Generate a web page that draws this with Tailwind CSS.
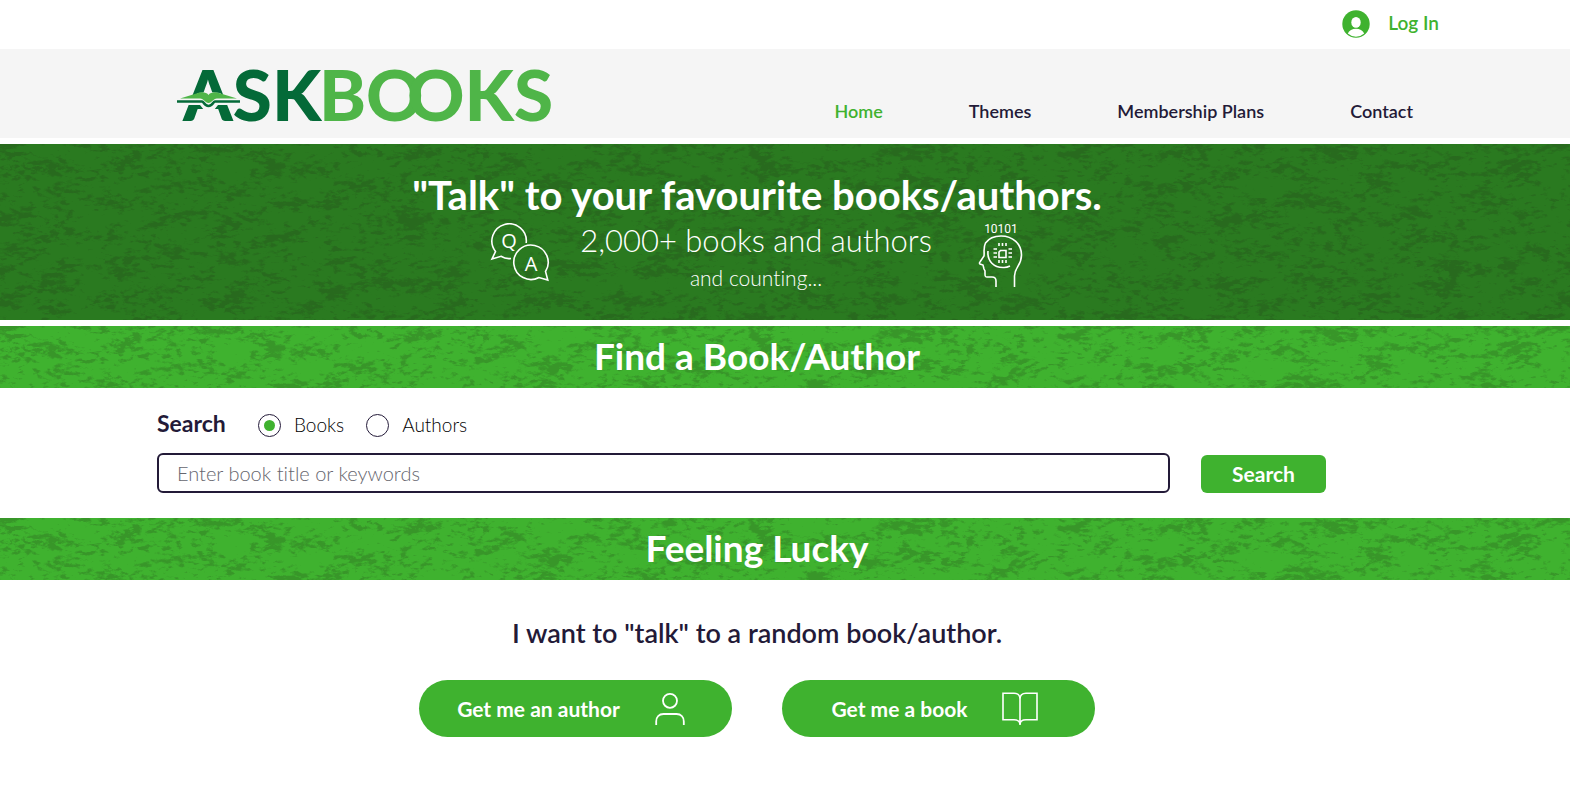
<!DOCTYPE html>
<html lang="en">
<head>
    <meta charset="utf-8" />
    <meta name="viewport" content="width=device-width, initial-scale=1" />
    <script src="https://cdn.jsdelivr.net/npm/@tailwindcss/browser@4"></script>
    <title>AskBooks</title>
</head>
<body class="bg-white font-['Lato','Open_Sans',sans-serif] text-[#231a38] [font-variant-ligatures:none]">

    <!-- shared texture for the green strips -->
    <svg class="absolute w-0 h-0" aria-hidden="true">
        <defs>
            <filter id="grunge" x="0" y="0" width="100%" height="100%" color-interpolation-filters="sRGB">
                <feTurbulence type="fractalNoise" baseFrequency="0.028 0.06" numOctaves="6" seed="11" result="fine" />
                <feTurbulence type="fractalNoise" baseFrequency="0.12 0.24" numOctaves="4" seed="5" result="grain" />
                <feComposite in="fine" in2="grain" operator="arithmetic" k2="0.5" k3="0.5" />
                <feColorMatrix values="0 0 0 0 0.14  0 0 0 0 0.28  0 0 0 0 0.1  9 0 0 0 -4.6" />
            </filter>
        </defs>
    </svg>

    <!-- top bar -->
    <div class="h-[49px] pr-[131px] pb-1 flex items-center justify-end">
        <a href="#" class="flex items-center gap-[18px] text-[19px] leading-6 font-semibold text-[#3fb22f]">
            <svg class="mt-0.5 w-7 h-7" viewBox="0 0 28 28" aria-hidden="true">
                <circle cx="14" cy="14" r="13.7" fill="#3fb22f" />
                <ellipse cx="14" cy="12.4" rx="4.7" ry="5.4" fill="#fff" />
                <path d="M5.800 23.600c1.200-3.200 4.600-4.800 8.200-4.800s7 1.600 8.200 4.800A12.500 12.500 0 0 1 14 26.800a12.500 12.500 0 0 1-8.200-3.200z" fill="#fff" />
            </svg>
            Log In
        </a>
    </div>

    <header class="bg-[#f5f5f5] h-[89px] pl-[176px] pr-[157px] flex justify-between">
        <a href="#" aria-label="ASKBOOKS">
            <svg class="w-[386px] h-[89px]" viewBox="0 0 386 89" font-family="Lato, sans-serif" font-weight="900" font-size="71">
                <text x="7" y="72" fill="#046a38">ASK</text>
                <text x="143" y="72" fill="#4fb548">BO</text>
                <text x="231" y="72" fill="#4fb548">OKS</text>
                <!-- open book across the A -->
                <path d="M1 49h16l5-5 11-1 11 1 6 5h14v7H42l-4 5H28l-4-5H1z" fill="#f5f5f5" />
                <path d="M1 52.500h25c2 0 2 4.500 6.500 4.500s4.500-4.500 6.500-4.500h25" stroke="#046a38" stroke-width="2.6" fill="none" />
                <path d="M4 49.500 22 44c4-1.500 9-.5 10.500 2 1.500-2.500 6.500-3.500 10.500-2l18 5.500H41c-4 0-5 4.500-8.500 4.500S28 49.500 24 49.500z" fill="#4fb548" />
            </svg>
        </a>
        <nav class="flex gap-[86px] pt-[50px] text-lg leading-6 font-semibold">
            <a href="#" class="text-[#3fb22f]">Home</a>
            <a href="#">Themes</a>
            <a href="#">Membership Plans</a>
            <a href="#">Contact</a>
        </nav>
    </header>

    <main>
        <!-- hero -->
        <section class="relative mt-1.5 h-44 pt-[26px] pr-14 bg-[#2a7a20] text-white text-center">
            <svg class="absolute inset-0 w-full h-full opacity-30" aria-hidden="true"><rect width="100%" height="100%" filter="url(#grunge)" /></svg>
            <div class="relative">
                <h1 class="text-[40px] leading-[50px] font-bold">"Talk" to your favourite books/authors.</h1>
                <div class="flex justify-center gap-[30px]">
                    <svg class="mt-[3px] w-[60px] h-[60px]" viewBox="0 0 60 60" fill="none" stroke="#fff" stroke-width="1.6" aria-hidden="true">
                        <path d="M21 35.500c-4 .6-7-.3-10-2.200L2 36l3.500-7.500A17.200 17.200 0 1 1 36.200 20" />
                        <path d="M55.500 48.500A17.200 17.200 0 1 0 49 54.500l8.800 2.600z" />
                        <text x="19" y="25" text-anchor="middle" fill="#fff" stroke="none" font-family="Open Sans, sans-serif" font-size="20">Q</text>
                        <text x="41" y="48" text-anchor="middle" fill="#fff" stroke="none" font-family="Open Sans, sans-serif" font-size="20">A</text>
                    </svg>
                    <div class="mr-4">
                        <p class="text-[31px] leading-10 font-light">2,000+ books and authors</p>
                        <p class="text-[21px] leading-9 font-light">and counting...</p>
                    </div>
                    <svg class="mt-[3px] w-[46px] h-[66px]" viewBox="0 0 46 66" fill="none" stroke="#fff" stroke-width="1.6" aria-hidden="true">
                        <text x="23" y="10" text-anchor="middle" fill="#fff" stroke="none" font-family="Roboto, sans-serif" font-size="12">10101</text>
                        <path d="M18 64v-6c0-3-1-4-4-4H9c-2 0-2-1-2-3v-3l-1-2-1-4-3-1c-.8-.5-.6-1.500 0-2l4-6c.6-4-1-8 1.500-13C11 15 17 13 23 13c12 0 20.500 8 20.500 19 0 11-7 12-7 21v11" />
                        <path d="M10 28c-1 10 6 17 16 16.500 2 0 4-.5 6-1.500" />
                        <path d="M22.500 27.500h5.500v7h-7v-5.500z M21 20v3M24.500 20v3M28 20v3M21 37v3M24.500 37v3M28 37v3M15.500 26h3.500M15.500 30h3.500M15.500 34h3.500M30.500 26h3.500M30.500 30h3.500M30.500 34h3.500" />
                    </svg>
                </div>
            </div>
        </section>

        <section class="relative mt-1.5 h-[62px] pr-14 pb-0.5 flex items-center justify-center bg-[#3fb22f] text-white">
            <svg class="absolute inset-0 w-full h-full opacity-25" aria-hidden="true"><rect width="100%" height="100%" filter="url(#grunge)" /></svg>
            <h2 class="relative text-[37px] leading-10 font-bold">Find a Book/Author</h2>
        </section>

        <!-- search -->
        <form class="h-[130px] pl-[157px] pr-[244px] pt-5">
            <div class="flex items-center h-8">
                <span class="pb-0.5 w-[101px] text-[23px] leading-8 font-bold">Search</span>
                <label class="mt-0.5 mr-[22px] flex items-center gap-[13px] text-[19px] leading-6 font-light text-black">
                    <input type="radio" name="kind" checked class="appearance-none w-[23px] h-[23px] rounded-full border border-[#231a38] bg-white grid place-content-center before:content-[''] before:w-[11px] before:h-[11px] before:rounded-full checked:before:bg-[#3fb22f]">
                    Books
                </label>
                <label class="mt-0.5 flex items-center gap-[13px] text-[19px] leading-6 font-light text-black">
                    <input type="radio" name="kind" class="appearance-none w-[23px] h-[23px] rounded-full border border-[#231a38] bg-white grid place-content-center before:content-[''] before:w-[11px] before:h-[11px] before:rounded-full checked:before:bg-[#3fb22f]">
                    Authors
                </label>
            </div>
            <div class="mt-[13px] flex items-end gap-[31px]">
                <input type="text" aria-label="Search" placeholder="Enter book title or keywords" class="flex-1 min-w-0 h-10 px-[18px] rounded-md border-2 border-[#231a38] text-xl font-light placeholder:text-[#66666e]">
                <button type="button" class="w-[125px] h-[38px] rounded-md bg-[#3fb22f] text-white text-[21px] leading-6 font-bold">Search</button>
            </div>
        </form>

        <section class="relative h-[62px] pr-14 pb-0.5 flex items-center justify-center bg-[#3fb22f] text-white">
            <svg class="absolute inset-0 w-full h-full opacity-25" aria-hidden="true"><rect width="100%" height="100%" filter="url(#grunge)" /></svg>
            <h2 class="relative text-[37px] leading-10 font-bold">Feeling Lucky</h2>
        </section>

        <section class="pt-[35px] pr-14 pb-12">
            <p class="text-center text-[27px] leading-9 font-semibold">I want to "talk" to a random book/author.</p>
            <div class="mt-[29px] flex justify-center gap-[50px]">
                <button type="button" class="w-[313px] h-[57px] pr-2 rounded-full bg-[#3fb22f] text-white text-[21px] leading-6 font-bold flex items-center justify-center gap-[34px]">
                    Get me an author
                    <svg class="w-[32px] h-[34px]" viewBox="0 0 32 34" fill="none" stroke="#fff" stroke-width="1.8" aria-hidden="true">
                        <circle cx="16" cy="8.8" r="7" />
                        <path d="M2.200 33v-3.500c0-4.500 2.800-7.500 7.300-7.500h13c4.500 0 7.300 3 7.300 7.500V33" />
                    </svg>
                </button>
                <button type="button" class="w-[313px] h-[57px] pr-2 rounded-full bg-[#3fb22f] text-white text-[21px] leading-6 font-bold flex items-center justify-center gap-[34px]">
                    Get me a book
                    <svg class="w-[36px] h-[34px]" viewBox="0 0 36 34" fill="none" stroke="#fff" stroke-width="1.6" aria-hidden="true">
                        <path d="M18 7c0-4-2.500-5.700-6-5.700H1v26.500h11c3.500 0 6 1 6 5 0-4 2.500-5 6-5h11V1.300H24c-3.500 0-6 1.700-6 5.700zM18 7v26" />
                    </svg>
                </button>
            </div>
        </section>
    </main>

</body>
</html>
